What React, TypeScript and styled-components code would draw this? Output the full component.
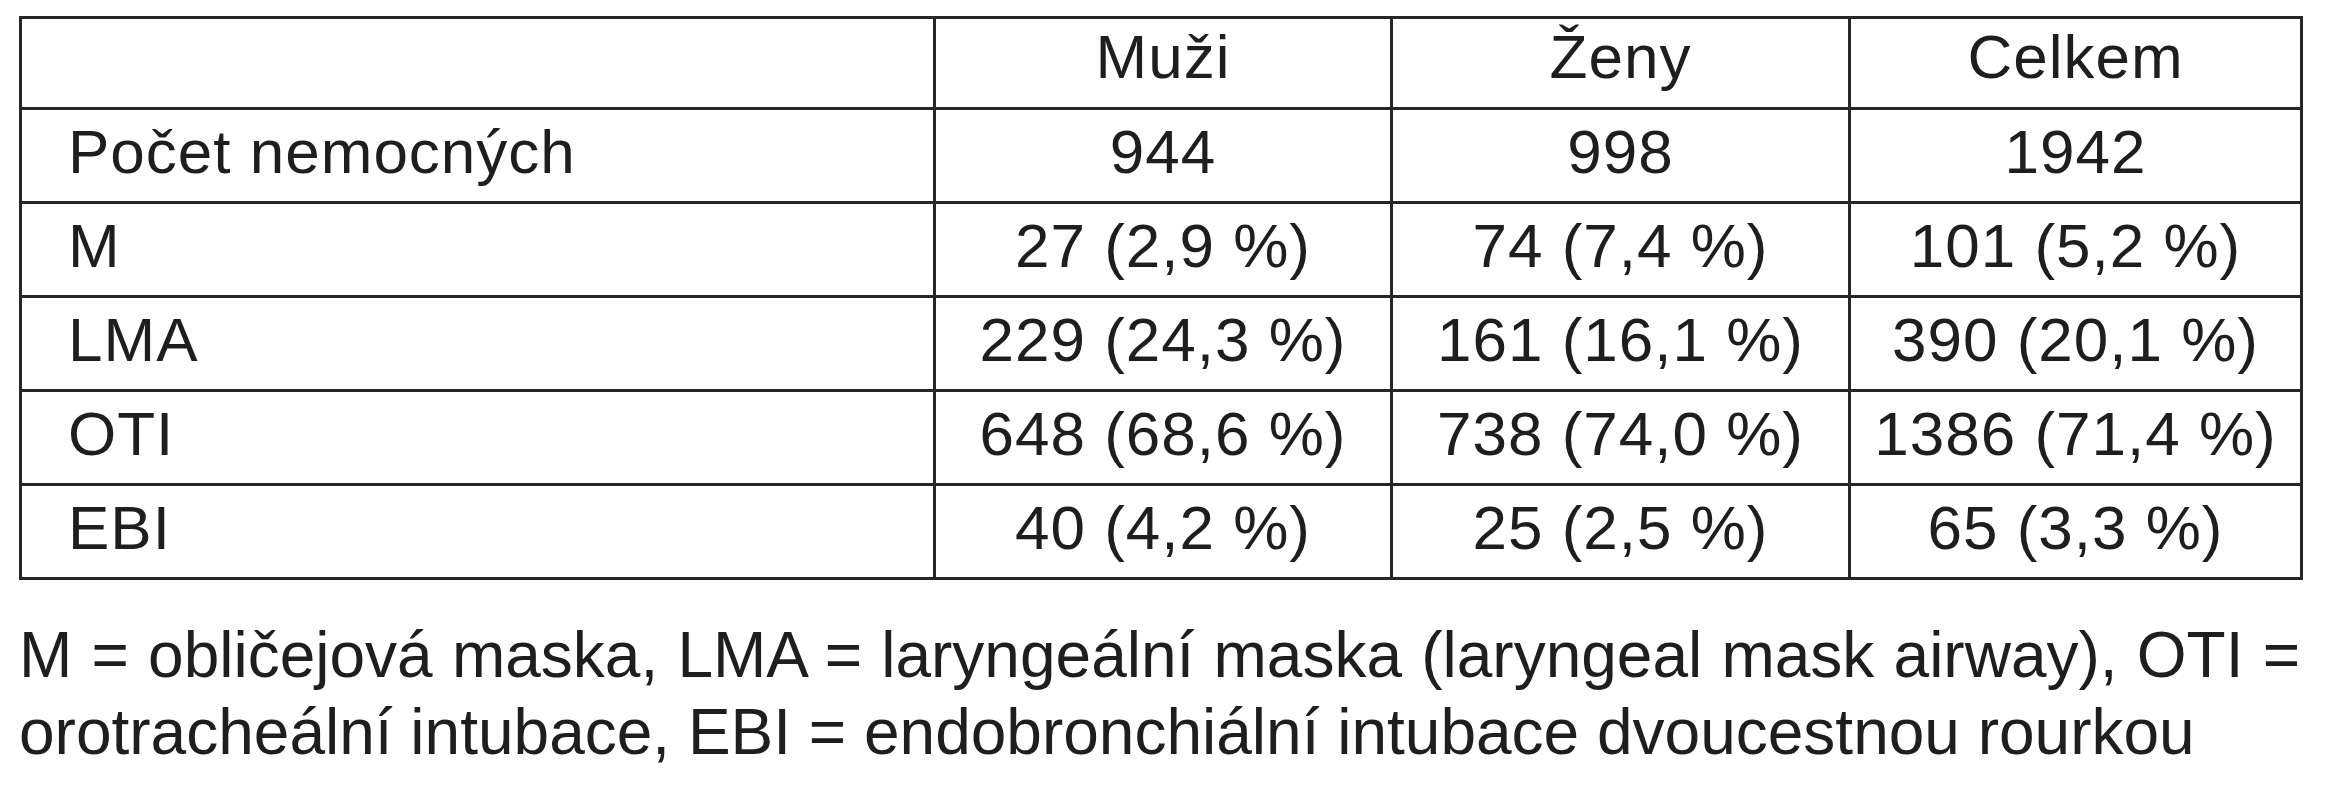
import React from "react";
import styled, { createGlobalStyle } from "styled-components";

const Global = createGlobalStyle`
  html, body { margin: 0; padding: 0; background: #ffffff; }
  body { font-family: "Liberation Sans", Arial, Helvetica, sans-serif; color: #1e1e1e; }
`;

const Page = styled.div`
  padding: 16px 29px 0 19px;
  width: 2281px;
`;

const Table = styled.table`
  width: 2281px;
  border-collapse: collapse;
  border: 3px solid #262626;
  table-layout: fixed;
  font-size: 62px;
  letter-spacing: 1px;
  line-height: 1;
`;

const Row = styled.tr<{ $h: number }>`
  height: ${(p) => p.$h}px;
`;

const Cell = styled.td<{ $label?: boolean; $head?: boolean }>`
  border: 3px solid #262626;
  padding: 0 0 ${(p) => (p.$head ? 12 : 8)}px ${(p) => (p.$label ? 46 : 0)}px;
  text-align: ${(p) => (p.$label ? "left" : "center")};
  vertical-align: middle;
  color: #1e1e1e;
  white-space: nowrap;
`;

const Caption = styled.div`
  margin-top: 37px;
  font-size: 64px;
  line-height: 77px;
  color: #1e1e1e;
`;

const Line = styled.div<{ $justify?: boolean }>`
  text-align: ${(p) => (p.$justify ? "justify" : "left")};
  text-align-last: ${(p) => (p.$justify ? "justify" : "left")};
  white-space: nowrap;
`;

const rows: [string, string, string, string][] = [
  ["Počet nemocných", "944", "998", "1942"],
  ["M", "27 (2,9 %)", "74 (7,4 %)", "101 (5,2 %)"],
  ["LMA", "229 (24,3 %)", "161 (16,1 %)", "390 (20,1 %)"],
  ["OTI", "648 (68,6 %)", "738 (74,0 %)", "1386 (71,4 %)"],
  ["EBI", "40 (4,2 %)", "25 (2,5 %)", "65 (3,3 %)"],
];

export default function App() {
  return (
    <>
      <Global />
      <Page>
        <Table>
          <colgroup>
            <col style={{ width: 914 }} />
            <col style={{ width: 457 }} />
            <col style={{ width: 458 }} />
            <col style={{ width: 452 }} />
          </colgroup>
          <tbody>
            <Row $h={91}>
              <Cell $label $head />
              <Cell $head>Muži</Cell>
              <Cell $head>Ženy</Cell>
              <Cell $head>Celkem</Cell>
            </Row>
            {rows.map((r) => (
              <Row $h={94} key={r[0]}>
                <Cell $label>{r[0]}</Cell>
                <Cell>{r[1]}</Cell>
                <Cell>{r[2]}</Cell>
                <Cell>{r[3]}</Cell>
              </Row>
            ))}
          </tbody>
        </Table>
        <Caption>
          <Line $justify>
            M = obličejová maska, LMA = laryngeální maska (laryngeal mask airway), OTI =
          </Line>
          <Line>orotracheální intubace, EBI = endobronchiální intubace dvoucestnou rourkou</Line>
        </Caption>
      </Page>
    </>
  );
}
